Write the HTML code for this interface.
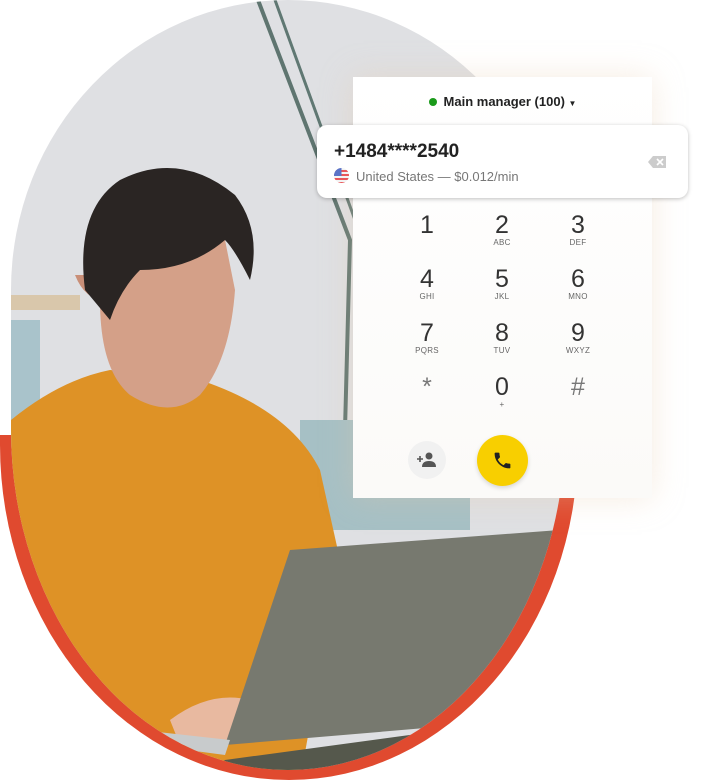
<!DOCTYPE html>
<html><head><meta charset="utf-8"><style>
body{margin:0;width:701px;height:780px;position:relative;overflow:hidden;background:#fff;font-family:"Liberation Sans",sans-serif}
.abs{position:absolute}
.card{left:353px;top:77px;width:299px;height:421px;background:linear-gradient(#fff,#fbfaf8);box-shadow:0 0 30px rgba(230,200,170,.35)}
.num{left:317px;top:125px;width:371px;height:73px;background:#fff;border-radius:10px;box-shadow:0 1px 4px rgba(0,0,0,.25)}
.k{position:absolute;width:60px;text-align:center;color:#333;font-size:25px;line-height:26px}
.k small{display:block;font-size:8px;line-height:10px;color:#666;letter-spacing:.3px}
</style></head><body>
<svg class="abs" style="left:0;top:0" width="701" height="780">
<defs><clipPath id="c"><path d="M11 290 A277 290 0 0 1 565 290 L565 430 A277 340 0 0 1 11 430 Z"/></clipPath></defs>
<path d="M0 435 L578 435 L578 445 A289 335 0 0 1 0 445 Z" fill="#e04a2f"/>
<g clip-path="url(#c)">
<rect x="0" y="0" width="701" height="780" fill="#dfe0e3"/>
<rect x="10" y="295" width="70" height="15" fill="#d9c7ab"/>
<rect x="10" y="320" width="30" height="120" fill="#a9c3cb"/>
<path d="M258 0 L350 240 L345 430" stroke="#5f7570" stroke-width="4" fill="none"/>
<path d="M275 0 L355 220" stroke="#607873" stroke-width="3" fill="none"/>
<rect x="300" y="420" width="170" height="110" fill="#a6c0c5"/>
<path d="M11 420 Q60 380 110 370 L200 380 Q290 410 320 470 L340 560 L300 780 L11 780 Z" fill="#de9226"/>
<path d="M100 300 Q100 370 130 395 Q170 420 200 395 Q230 360 235 290 L225 240 Q170 230 100 260Z" fill="#d4a088"/>
<path d="M75 275 Q85 300 105 300 L105 275 Z" fill="#c98f78"/>
<path d="M85 290 Q75 210 120 180 Q180 150 235 195 Q262 230 250 280 Q235 250 225 240 Q190 270 140 270 Q120 290 110 320 Z" fill="#2a2523"/>
<path d="M170 720 Q210 690 250 700 L260 740 L180 745 Z" fill="#e8b9a0"/>
<path d="M225 745 L290 550 L560 530 L520 720 Z" fill="#77796f"/>
<path d="M140 730 L230 740 L225 755 L150 745 Z" fill="#c8cbcc"/>
<path d="M225 760 L520 720 L470 780 L200 780 Z" fill="#55584c"/>
</g>
</svg>
<div class="abs card">
<div class="abs" style="left:0;width:299px;top:17px;text-align:center;font-size:13px;color:#222;font-weight:bold"><span style="display:inline-block;width:8px;height:8px;border-radius:50%;background:#1a9a1a;margin-right:7px"></span>Main manager (100) <span style="font-size:8px">▼</span></div>
<div class="k" style="left:44px;top:135px">1</div>
<div class="k" style="left:119px;top:135px">2<small>ABC</small></div>
<div class="k" style="left:195px;top:135px">3<small>DEF</small></div>
<div class="k" style="left:44px;top:189px">4<small>GHI</small></div>
<div class="k" style="left:119px;top:189px">5<small>JKL</small></div>
<div class="k" style="left:195px;top:189px">6<small>MNO</small></div>
<div class="k" style="left:44px;top:243px">7<small>PQRS</small></div>
<div class="k" style="left:119px;top:243px">8<small>TUV</small></div>
<div class="k" style="left:195px;top:243px">9<small>WXYZ</small></div>
<div class="k" style="left:44px;top:297px;color:#777">*</div>
<div class="k" style="left:119px;top:297px">0<small>+</small></div>
<div class="k" style="left:195px;top:297px;color:#777">#</div>
<div class="abs" style="left:55px;top:364px;width:38px;height:38px;border-radius:50%;background:#f1f1f1"></div>
<svg class="abs" style="left:63px;top:374px" width="22" height="18" viewBox="0 0 22 18"><path d="M1 8h6M4 5v6" stroke="#555" stroke-width="1.6"/><circle cx="13" cy="5" r="3.5" fill="#555"/><path d="M6 16q0-6 7-6t7 6z" fill="#555"/></svg>
<div class="abs" style="left:124px;top:358px;width:51px;height:51px;border-radius:50%;background:#f8cf00;box-shadow:0 2px 5px rgba(0,0,0,.15)"></div>
<svg class="abs" style="left:139px;top:373px" width="21" height="21" viewBox="0 0 24 24"><path d="M6.6 10.8c1.4 2.8 3.8 5.1 6.6 6.6l2.2-2.2c.3-.3.7-.4 1-.2 1.1.4 2.300.6 3.6.6.6 0 1 .4 1 1V20c0 .6-.4 1-1 1C10.6 21 3 13.4 3 4c0-.6.4-1 1-1h3.5c.6 0 1 .4 1 1 0 1.3.2 2.5.6 3.6.1.3 0 .7-.2 1z" fill="#222"/></svg>
</div>
<div class="abs num">
<div class="abs" style="left:17px;top:16px;font-size:19px;font-weight:bold;color:#222">+1484****2540</div>
<svg class="abs" style="left:17px;top:43px" width="15" height="15" viewBox="0 0 15 15"><clipPath id="f"><circle cx="7.5" cy="7.5" r="7.5"/></clipPath><g clip-path="url(#f)"><rect width="15" height="15" fill="#f3f3f3"/><rect y="2" width="15" height="2" fill="#e8565a"/><rect y="6" width="15" height="2" fill="#e8565a"/><rect y="10" width="15" height="2" fill="#e8565a"/><rect y="14" width="15" height="2" fill="#e8565a"/><rect width="7.5" height="8" fill="#5b73c7"/></g></svg>
<div class="abs" style="left:39px;top:44px;font-size:13px;color:#777">United States — $0.012/min</div>
<svg class="abs" style="left:331px;top:31px" width="18" height="12" viewBox="0 0 18 12"><path d="M5 0h13v12H5L0 6z" fill="#ccc"/><path d="M9 3l6 6M15 3l-6 6" stroke="#fff" stroke-width="1.6"/></svg>
</div>
</body></html>
